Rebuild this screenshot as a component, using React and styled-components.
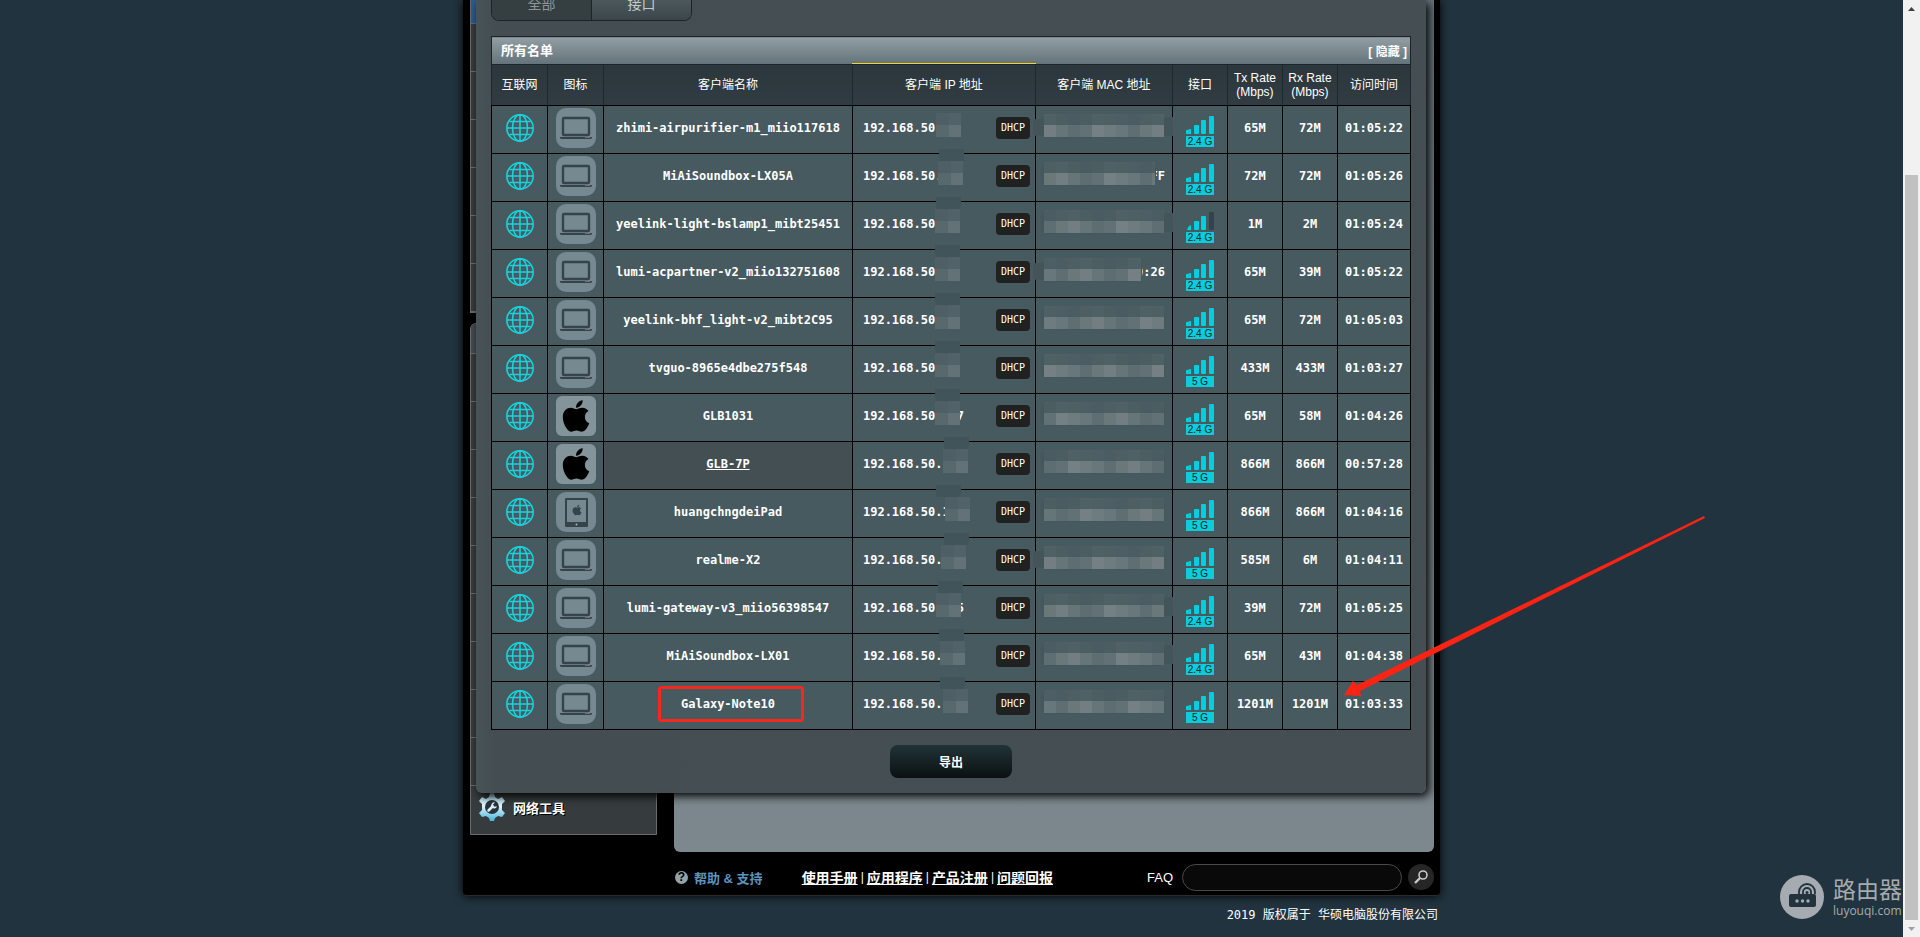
import React from 'react';
import styled, { createGlobalStyle } from 'styled-components';
import { FaApple } from 'react-icons/fa';

const clients = [
	{ name: 'zhimi-airpurifier-m1_miio117618', ip: '192.168.50', ipMask: 83, mac: '', band: '2.4 G', tx: '65M', rx: '72M', time: '01:05:22', left: true, right: true },
	{ name: 'MiAiSoundbox-LX05A', ip: '192.168.50.', ipMask: 85, seam: 86, mac: 'FF', macWidth: 111, band: '2.4 G', tx: '72M', rx: '72M', time: '01:05:26' },
	{ name: 'yeelink-light-bslamp1_mibt25451', ip: '192.168.50', ipMask: 82, seam: 83, mac: '', band: '2.4 G', weak: true, tx: '1M', rx: '2M', time: '01:05:24', right: true },
	{ name: 'lumi-acpartner-v2_miio132751608', ip: '192.168.50', ipMask: 82, seam: 82, mac: '0:26', macWidth: 97, band: '2.4 G', tx: '65M', rx: '39M', time: '01:05:22', left: true },
	{ name: 'yeelink-bhf_light-v2_mibt2C95', ip: '192.168.50', ipMask: 82, seam: 82, mac: '', band: '2.4 G', tx: '65M', rx: '72M', time: '01:05:03' },
	{ name: 'tvguo-8965e4dbe275f548', ip: '192.168.50', ipMask: 82, seam: 82, mac: '', band: '5 G', tx: '433M', rx: '433M', time: '01:03:27' },
	{ name: 'GLB1031', ip: '192.168.50.  7', ipMask: 82, seam: 82, mac: '', device: 'apple', band: '2.4 G', tx: '65M', rx: '58M', time: '01:04:26' },
	{ name: 'GLB-7P', ip: '192.168.50.', ipMask: 90, seam: 91, mac: '', device: 'apple', hovered: true, band: '5 G', tx: '866M', rx: '866M', time: '00:57:28' },
	{ name: 'huangchngdeiPad', ip: '192.168.50.1', ipMask: 92, seam: 83, mac: '', device: 'tablet', band: '5 G', tx: '866M', rx: '866M', time: '01:04:16' },
	{ name: 'realme-X2', ip: '192.168.50.', ipMask: 88, seam: 91, mac: '', band: '5 G', tx: '585M', rx: '6M', time: '01:04:11', left: true },
	{ name: 'lumi-gateway-v3_miio56398547', ip: '192.168.50.  5', ipMask: 83, seam: 85, mac: '', band: '2.4 G', tx: '39M', rx: '72M', time: '01:05:25', right: true },
	{ name: 'MiAiSoundbox-LX01', ip: '192.168.50.', ipMask: 87, seam: 86, mac: '', band: '2.4 G', tx: '65M', rx: '43M', time: '01:04:38', right: true },
	{ name: 'Galaxy-Note10', ip: '192.168.50.', ipMask: 90, seam: 87, mac: '', marked: true, band: '5 G', tx: '1201M', rx: '1201M', time: '01:03:33' },
];

const tones = ['#737e83', '#5e6e73', '#6e7c80', '#627175', '#667577', '#6b7879', '#68777b', '#748084', '#5d6d72'];

const GlobeIcon = () => (
	<svg width="28" height="28" viewBox="0 0 28 28" fill="none" stroke="#1bd3de" strokeWidth="1.5">
		<circle cx="14" cy="14" r="13.2" />
		<ellipse cx="14" cy="14" rx="7.5" ry="13.2" />
		<path d="M14 1v26M1 14h26M3.5 7.500h21M3.5 20.500h21" />
	</svg>
);

const LaptopIcon = () => (
	<svg width="40" height="40" viewBox="0 0 40 40">
		<rect x="7" y="10" width="26" height="17" rx="1" fill="none" stroke="#34444a" strokeWidth="2.400" />
		<path d="M4 29h32v1l-1 1H5l-1-1z" fill="#34444a" />
		<path d="M29 29.5h5" stroke="#66767c" />
	</svg>
);

const TabletIcon = () => (
	<svg width="40" height="40" viewBox="0 0 40 40">
		<path fillRule="evenodd" d="M10 6h21q1 0 1 1v27q0 1-1 1H10q-1 0-1-1V7q0-1 1-1zm1 2v22h19V8z" fill="#34444a" />
		<circle cx="20.5" cy="32.5" r="1" fill="#a8b2b6" />
		<FaApple x="15" y="12" width="11" height="14" color="#34444a" />
	</svg>
);

const SignalIcon = ({ weak }) => (
	<svg width="28" height="18" viewBox="0 0 28 18" fill="#00cfe3">
		<path d={weak ? 'M1 18q1-4 4-5v5z' : 'M0 14q3 0 4-1h1v5H0z'} />
		<rect x="8" y="9" width="5" height="9" rx="1" />
		<rect x="15" y="4" width="5" height="14" rx="1" />
		<rect x="23" width="5" height="18" rx="1" fill={weak ? '#34434b' : '#00cfe3'} />
	</svg>
);

const GearIcon = () => (
	<svg width="26" height="28" viewBox="0 0 26 28">
		<defs>
			<linearGradient id="gear" x1="0" y1="0" x2="0" y2="28" gradientUnits="userSpaceOnUse">
				<stop offset="0" stopColor="#8fc6dc" />
				<stop offset="0.45" stopColor="#e4f5fa" />
				<stop offset="1" stopColor="#43b4df" />
			</linearGradient>
		</defs>
		<path
			fill="url(#gear)"
			d="M10 4l1-4h4l1 4 3 2 4-2 3 4-3 3v6l3 3-3 4-4-1-3 2-1 3h-4l-1-3-3-2-4 1-3-4 3-3v-6L0 8l3-4 4 2z"
		/>
		<circle cx="13" cy="14" r="7" fill="#26343b" />
		<path d="M9.500 17.500l4-4" stroke="#dceff5" strokeWidth="2.500" strokeLinecap="round" />
		<path d="M16 9.500a3 3 0 1 0 2 4l-3 0-1-2z" fill="#dceff5" />
	</svg>
);

const RouterLogo = () => (
	<svg width="44" height="44" viewBox="0 0 44 44">
		<circle cx="22" cy="22" r="22" fill="#a5abb1" />
		<rect x="9" y="19" width="27" height="13" rx="2" fill="#22333e" />
		<g fill="#a5abb1">
			<circle cx="17" cy="26" r="1.700" />
			<circle cx="22.500" cy="26" r="1.700" />
			<circle cx="28" cy="26" r="1.700" />
		</g>
		<g fill="none" stroke="#22333e" strokeWidth="1.800">
			<path d="M19 19v-2a8 8 0 0 1 16 0v2" />
			<path d="M23 19v-2a4 4 0 0 1 8 0v2" />
		</g>
		<circle cx="27" cy="17.500" r="1.500" fill="#22333e" />
	</svg>
);

// blocks that hide the last part of an address
const IpMask = ({ x, seam }) => (
	<MaskLayer width="183" height="48">
		{seam && <rect x={seam} y="-5" width="25" height="12" fill="#415459" />}
		<rect x={x} y="7" width="13" height="12" fill="#4e6065" />
		<rect x={x + 13} y="7" width="12" height="12" fill="#516368" />
		<rect x={x} y="19" width="13" height="12" fill="#58696e" />
		<rect x={x + 13} y="19" width="12" height="12" fill="#637277" />
	</MaskLayer>
);

const MacMask = ({ row, width = 120, left, right }) => (
	<MaskLayer width="136" height="48">
		<rect x="5" y="9" width={width + 4} height="23" rx="8" fill="#44575c" />
		{left && <rect x="-3" y="13" width="12" height="17" rx="4" fill="#435559" />}
		{right && <rect x="128" y="11" width="12" height="19" rx="4" fill="#435559" />}
		{Array.from({ length: 10 }, (_, i) => {
			const w = Math.min(12, width - i * 12);
			if (w <= 0) return null;
			const tone = tones[(i * 4 + row * 5) % tones.length];
			return (
				<g key={i} fill={tone}>
					<rect x={8 + i * 12} y="8" width={w} height="11" opacity="0.25" />
					<rect x={8 + i * 12} y="19" width={w} height="12" />
				</g>
			);
		})}
	</MaskLayer>
);

const DeviceIcon = ({ type }) => {
	if (type === 'apple') return <FaApple size={36} color="#000" />;
	if (type === 'tablet') return <TabletIcon />;
	return <LaptopIcon />;
};

const ClientRow = ({ client, row }) => (
	<tr>
		<Cell><Center><GlobeIcon /></Center></Cell>
		<Cell>
			<Device $apple={client.device === 'apple'}>
				<DeviceIcon type={client.device} />
			</Device>
		</Cell>
		<Cell $hovered={client.hovered}>
			<Name $underline={client.hovered} $marked={client.marked}>{client.name}</Name>
		</Cell>
		<Cell>
			<Address>
				<span>{client.ip}</span>
				<Badge>DHCP</Badge>
			</Address>
			<IpMask x={client.ipMask} seam={client.seam} />
		</Cell>
		<Cell>
			<Mac>{client.mac}</Mac>
			<MacMask row={row} width={client.macWidth} left={client.left} right={client.right} />
		</Cell>
		<Cell>
			<Signal>
				<SignalIcon weak={client.weak} />
				<Band>{client.band}</Band>
			</Signal>
		</Cell>
		<Cell>{client.tx}</Cell>
		<Cell>{client.rx}</Cell>
		<Cell>{client.time}</Cell>
	</tr>
);

const App = () => (
	<Page>
		<GlobalStyle />
		<Main>
			<Wrapper>
				<Body>
					<Sidebar>
						<Menu>
							<MenuRow $first />
							{[1, 2, 3, 4, 5, 6].map((n) => <MenuRow key={n} />)}
						</Menu>
						<Menu $rounded>
							<MenuHeading />
							{[1, 2, 3, 4, 5, 6, 7, 8, 9].map((n) => <MenuRow key={n} />)}
							<MenuLink href="#tools">
								<GearIcon />
								<span>网络工具</span>
							</MenuLink>
						</Menu>
					</Sidebar>
					<Panel />
				</Body>
				<Footer>
					<Help href="#help">
						<HelpMark>?</HelpMark>
						<span>帮助 &amp; 支持</span>
					</Help>
					<Links>
						<FooterLink href="#manual">使用手册</FooterLink>|
						<FooterLink href="#utility">应用程序</FooterLink>|
						<FooterLink href="#register">产品注册</FooterLink>|
						<FooterLink href="#feedback">问题回报</FooterLink>
					</Links>
					<Search>
						<label htmlFor="faq">FAQ</label>
						<SearchInput id="faq" type="text" />
						<SearchButton aria-label="FAQ">
							<svg width="16" height="16" viewBox="0 0 16 16" fill="none" stroke="#c8c8c8">
								<circle cx="10" cy="6" r="4" strokeWidth="1.600" />
								<path d="M7 9l-5 5" strokeWidth="2.400" />
							</svg>
						</SearchButton>
					</Search>
				</Footer>
				<Popup>
					<Tabs>
						<Tab $active>全部</Tab>
						<Tab>接口</Tab>
					</Tabs>
					<Table>
						<colgroup>
							<Col $w={56} />
							<Col $w={56} />
							<col />
							<Col $w={183} />
							<Col $w={137} />
							<Col $w={55} />
							<Col $w={55} />
							<Col $w={55} />
							<Col $w={73} />
						</colgroup>
						<thead>
							<tr>
								<TitleCell colSpan={9}>
									<TitleBar>
										<span>所有名单</span>
										<HideButton>[ 隐藏 ]</HideButton>
									</TitleBar>
								</TitleCell>
							</tr>
							<tr>
								<HeadCell>互联网</HeadCell>
								<HeadCell>图标</HeadCell>
								<HeadCell>客户端名称</HeadCell>
								<HeadCell $sorted>客户端 IP 地址</HeadCell>
								<HeadCell>客户端 MAC 地址</HeadCell>
								<HeadCell>接口</HeadCell>
								<HeadCell>Tx Rate (Mbps)</HeadCell>
								<HeadCell>Rx Rate (Mbps)</HeadCell>
								<HeadCell>访问时间</HeadCell>
							</tr>
						</thead>
						<tbody>
							{clients.map((client, i) => <ClientRow key={client.name} client={client} row={i} />)}
						</tbody>
					</Table>
					<ExportButton>导出</ExportButton>
				</Popup>
				<Arrow width="362" height="181" viewBox="0 0 362 181">
					<path d="M0 179l9-14 4 4L360 0l1 2L16 175l1 5z" fill="#fb2414" />
				</Arrow>
			</Wrapper>
			<Copyright>2019 版权属于 华硕电脑股份有限公司</Copyright>
			<Watermark>
				<RouterLogo />
				<WatermarkText>
					<strong>路由器</strong>
					<span>luyouqi.com</span>
				</WatermarkText>
			</Watermark>
		</Main>
		<Scrollbar>
			<svg width="17" height="17"><path d="M5 11h7L8.500 7z" fill="#404040" /></svg>
			<Thumb />
			<svg width="17" height="17"><path d="M5 7h7l-3.500 4z" fill="#a0a0a0" /></svg>
		</Scrollbar>
	</Page>
);

export default App;

const GlobalStyle = createGlobalStyle`
	* {
		box-sizing: border-box;
	}
	body {
		margin: 0;
		background: #21333e;
		font-family: 'Liberation Sans', 'Noto Sans CJK SC', sans-serif;
		font-size: 12px;
		color: #fff;
	}
	button, input {
		font-family: inherit;
	}
	svg {
		display: block;
	}
`;

const Page = styled.div`
	display: flex;
	min-height: 100vh;
`;

const Main = styled.main`
	position: relative;
	flex: 1;
	min-width: 0;
	overflow: hidden;
`;

const Wrapper = styled.div`
	position: relative;
	max-width: 977px;
	margin: 0 auto;
	padding: 0 6px 0 7px;
	background: #000;
	border-bottom: 1px solid #2b2b2b;
	border-radius: 0 0 4px 4px;
	box-shadow: 0 0 10px #000;
`;

const Body = styled.div`
	display: flex;
	gap: 17px;
`;

const Sidebar = styled.nav`
	display: flex;
	flex-direction: column;
	gap: 10px;
	width: 187px;
	padding-bottom: 17px;
`;

const Menu = styled.div`
	border: 1px solid #6b6b6b;
	border-top-width: ${(props) => (props.$rounded ? '1px' : '0')};
	border-radius: ${(props) => (props.$rounded ? '6px 6px 0 0' : '0')};
	background: #363b3d;
	overflow: hidden;
`;

const MenuRow = styled.div`
	height: ${(props) => (props.$first ? '24px' : '48px')};
	background: ${(props) => (props.$first ? '#2b5d8c' : 'linear-gradient(90deg, #393b3c, #303435)')};
	border-bottom: 1px solid ${(props) => (props.$first ? '#3d77a5' : '#6b6f70')};
`;

const MenuHeading = styled.div`
	height: 30px;
	background: #444c4f;
	border-bottom: 1px solid #6b6f70;
`;

const MenuLink = styled.a`
	display: flex;
	align-items: center;
	gap: 8px;
	height: 48px;
	padding: 0 8px 6px;
	font-size: 13px;
	font-weight: 700;
	color: #fff;
	text-decoration: none;
	text-shadow: 1px 1px 0 #000;
`;

const Panel = styled.div`
	flex: 1;
	background: linear-gradient(#66757c, #7c888d);
	border-radius: 0 0 6px 6px;
`;

const Footer = styled.footer`
	display: flex;
	align-items: center;
	height: 43px;
	margin-left: 204px;
	padding-top: 7px;
`;

const Help = styled.a`
	display: flex;
	align-items: center;
	gap: 6px;
	padding-left: 1px;
	font-size: 13px;
	font-weight: 700;
	color: #5b93be;
	text-decoration: none;
`;

const HelpMark = styled.span`
	width: 13px;
	height: 13px;
	border-radius: 50%;
	background: #93a3aa;
	color: #000;
	font-size: 12px;
	line-height: 13px;
	text-align: center;
`;

const Links = styled.div`
	display: flex;
	align-items: center;
	gap: 3px;
	margin-left: 39px;
	font-size: 12px;
`;

const FooterLink = styled.a`
	font-size: 14px;
	font-weight: 700;
	color: #fff;
	text-decoration: underline;
`;

const Search = styled.div`
	display: flex;
	align-items: center;
	margin-left: auto;
	font-size: 13px;
`;

const SearchInput = styled.input`
	width: 220px;
	height: 27px;
	margin: 0 6px 0 9px;
	padding: 0 12px;
	border: 1px solid #4a4a4a;
	border-radius: 14px;
	background: #090909;
	color: #fff;
`;

const SearchButton = styled.button`
	display: flex;
	align-items: center;
	justify-content: center;
	width: 26px;
	height: 26px;
	padding: 0;
	border: 0;
	border-radius: 50%;
	background: #262626;
`;

const Popup = styled.section`
	position: absolute;
	top: 0;
	left: 13px;
	right: 14px;
	padding: 0 15px 15px;
	background: linear-gradient(90deg, #485357, #444e52 20px, #454f53);
	border-radius: 0 0 6px 6px;
	box-shadow: 3px 3px 10px #000;
`;

const Tabs = styled.div`
	display: flex;
	width: 201px;
	height: 21px;
	margin-bottom: 15px;
	border: 1px solid #1c2427;
	border-top: 0;
	border-radius: 0 0 8px 8px;
	overflow: hidden;
`;

const Tab = styled.button`
	flex: 1;
	padding: 0 0 12px;
	border: 0;
	border-right: ${(props) => (props.$active ? '1px solid #1c2427' : '0')};
	background: ${(props) => (props.$active ? '#353e40' : 'linear-gradient(#4d585d, #3b464a)')};
	color: ${(props) => (props.$active ? '#8c979c' : '#c3cacd')};
	font-size: 14px;
	line-height: 8px;
`;

const Table = styled.table`
	width: 100%;
	table-layout: fixed;
	border-collapse: collapse;
`;

const Col = styled.col`
	width: ${(props) => props.$w}px;
`;

const TitleCell = styled.th`
	height: 28px;
	padding: 0;
	border: 1px solid #1c2427;
	background: linear-gradient(#929ea4, #63737a);
`;

const TitleBar = styled.div`
	display: flex;
	align-items: center;
	justify-content: space-between;
	padding: 0 3px 0 9px;
	font-size: 13px;
	line-height: 20px;
`;

const HideButton = styled.button`
	padding: 0;
	border: 0;
	background: none;
	color: #fff;
	font-size: 12px;
	font-weight: 700;
`;

const HeadCell = styled.th`
	position: relative;
	height: 41px;
	padding: 0;
	border: 1px solid #1e272b;
	border-bottom-color: #000;
	background: linear-gradient(#2c373c, #303c41);
	font-weight: 400;
	line-height: 14px;

	&::before {
		content: '';
		display: ${(props) => (props.$sorted ? 'block' : 'none')};
		position: absolute;
		top: -2px;
		left: -1px;
		right: -1px;
		height: 1px;
		background: #f5d426;
	}
`;

const Cell = styled.td`
	position: relative;
	height: 48px;
	padding: 0 0 3px;
	border: 1px solid #000;
	background: ${(props) => (props.$hovered ? '#444f53' : '#475a5f')};
	font-family: 'DejaVu Sans Mono', 'Noto Sans CJK SC', monospace;
	font-size: 12px;
	font-weight: 700;
	line-height: 14px;
	text-align: center;
	white-space: pre;
`;

const Center = styled.div`
	display: flex;
	justify-content: center;
`;

const Device = styled.div`
	display: flex;
	align-items: center;
	justify-content: center;
	width: 40px;
	height: 40px;
	margin: 0 auto;
	border-radius: ${(props) => (props.$apple ? '6px' : '10px')};
	background: ${(props) => (props.$apple ? '#84949b' : '#768990')};
`;

const Name = styled.span`
	position: relative;
	text-decoration: ${(props) => (props.$underline ? 'underline' : 'none')};

	&::after {
		content: '';
		display: ${(props) => (props.$marked ? 'block' : 'none')};
		position: absolute;
		inset: -11px -29px -11px -23px;
		border: 3px solid #f4281c;
		border-radius: 3px;
	}
`;

const Address = styled.div`
	display: flex;
	align-items: center;
	justify-content: space-between;
	padding: 0 5px 0 10px;
`;

const Badge = styled.span`
	width: 34px;
	border-radius: 4px;
	background: #212121;
	font-size: 10px;
	font-weight: 400;
	line-height: 22px;
`;

const Mac = styled.div`
	padding-right: 7px;
	text-align: right;
`;

const MaskLayer = styled.svg`
	position: absolute;
	top: 0;
	left: 0;
	overflow: visible;
	pointer-events: none;
`;

const Signal = styled.div`
	display: flex;
	flex-direction: column;
	gap: 2px;
	width: 28px;
	margin: 0 auto;
	padding-top: 6px;
`;

const Band = styled.span`
	background: #0ccbdb;
	color: #10262b;
	font-family: 'Liberation Sans', sans-serif;
	font-size: 10px;
	font-weight: 400;
	line-height: 11px;
`;

const ExportButton = styled.button`
	display: block;
	width: 122px;
	height: 33px;
	margin: 15px auto 0;
	border: 0;
	border-radius: 8px;
	background: linear-gradient(#213337, #0b1012);
	color: #fff;
	font-size: 12px;
	font-weight: 700;
`;

const Arrow = styled.svg`
	position: absolute;
	top: 516px;
	left: 881px;
	pointer-events: none;
`;

const Copyright = styled.p`
	max-width: 977px;
	margin: 11px auto 0;
	padding-right: 2px;
	font-family: 'DejaVu Sans Mono', 'Noto Sans CJK SC', monospace;
	line-height: 16px;
	text-align: right;
`;

const Watermark = styled.div`
	position: absolute;
	right: 1px;
	bottom: 18px;
	display: flex;
	align-items: center;
	gap: 9px;
	color: #a5abb1;
`;

const WatermarkText = styled.div`
	display: flex;
	flex-direction: column;
	font-family: 'Open Sans', sans-serif;
	font-size: 12px;
	line-height: 14px;

	strong {
		font-family: 'Liberation Sans', 'Noto Sans CJK SC', sans-serif;
		font-size: 23px;
		font-weight: 400;
		line-height: 27px;
	}
`;

const Scrollbar = styled.div`
	display: flex;
	flex-direction: column;
	width: 17px;
	background: #f1f1f1;
`;

const Thumb = styled.div`
	flex: 1;
	margin: 158px 2px 0;
	background: #c1c1c1;
`;
